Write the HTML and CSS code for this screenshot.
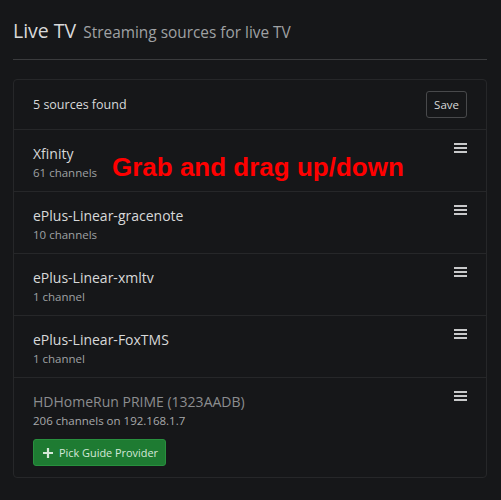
FILE: index.html
```html
<!DOCTYPE html>
<html lang="en">
<head>
  <meta charset="UTF-8" />
  <meta name="viewport" content="width=device-width, initial-scale=1.0" />
  <title>Live TV</title>
  <link rel="stylesheet" href="styles.css">
</head>
<body>
  <div class="page">
    <div class="page-header">
      <h1>Live TV <small>Streaming sources for live TV</small></h1>
    </div>

    <div class="card">
      <div class="card-header">
        <span>5 sources found</span>
        <button class="btn-save">Save</button>
      </div>

      <div class="source">
        <div class="info">
          <div class="name">Xfinity</div>
          <div class="count">61 channels</div>
        </div>
        <span class="handle"><i></i><i></i><i></i></span>
        <div class="hint">Grab and drag up/down</div>
      </div>

      <div class="source">
        <div class="info">
          <div class="name">ePlus-Linear-gracenote</div>
          <div class="count">10 channels</div>
        </div>
        <span class="handle"><i></i><i></i><i></i></span>
      </div>

      <div class="source">
        <div class="info">
          <div class="name">ePlus-Linear-xmltv</div>
          <div class="count">1 channel</div>
        </div>
        <span class="handle"><i></i><i></i><i></i></span>
      </div>

      <div class="source">
        <div class="info">
          <div class="name">ePlus-Linear-FoxTMS</div>
          <div class="count">1 channel</div>
        </div>
        <span class="handle"><i></i><i></i><i></i></span>
      </div>

      <div class="source disabled">
        <div class="info">
          <div class="name">HDHomeRun PRIME (1323AADB)</div>
          <div class="count">206 channels on 192.168.1.7</div>
          <button class="btn-pick">
            <svg width="10" height="10" viewBox="0 0 10 10"><path d="M5 0v10M0 5h10" stroke="currentColor" stroke-width="2.2"/></svg>
            Pick Guide Provider
          </button>
        </div>
        <span class="handle"><i></i><i></i><i></i></span>
      </div>
    </div>
  </div>
</body>
</html>
```

FILE: styles.css
```css
* { box-sizing: border-box; }
body {
  margin: 0;
  background: #161719;
  color: #d8d9da;
  font-family: "Open Sans", "Noto Sans", sans-serif;
}
.page {
  padding: 17px 14px 0 13px;
}
.page-header {
  border-bottom: 1px solid #3a3b3d;
  padding-bottom: 12px;
  margin-bottom: 19px;
}
.page-header h1 {
  margin: 0;
  font-size: 19.5px;
  font-weight: 400;
  line-height: 28px;
  color: #d8d9da;
}
.page-header small {
  font-size: 15.4px;
  color: #9fa1a3;
  margin-left: 2px;
}
.card {
  border: 1px solid #262729;
  border-radius: 4px;
}
.card-header {
  display: flex;
  align-items: center;
  justify-content: space-between;
  height: 50px;
  padding: 0 19px;
  font-size: 12.5px;
  border-bottom: 1px solid #262729;
}
.btn-save {
  font-family: inherit;
  font-size: 11.5px;
  color: #d8d9da;
  background: transparent;
  border: 1px solid #48494b;
  border-radius: 3px;
  height: 27px;
  padding: 0 7px;
}
.source {
  position: relative;
  display: flex;
  justify-content: space-between;
  align-items: flex-start;
  padding: 14px 19px 9px;
  border-bottom: 1px solid #262729;
}
.source:last-child { border-bottom: none; padding-bottom: 11px; }
.name {
  font-size: 14px;
  line-height: 20px;
  color: #d8d9da;
}
.count {
  font-size: 11.5px;
  line-height: 18px;
  color: #9fa1a3;
}
.disabled .name { color: #8c8d8f; }
.disabled .count { color: #a8a9ab; }
.handle {
  display: flex;
  flex-direction: column;
  gap: 2px;
  width: 13px;
  margin-top: -1px;
}
.handle i {
  display: block;
  height: 2px;
  background: #c8c9ca;
}
.btn-pick {
  display: flex;
  align-items: center;
  gap: 6px;
  margin-top: 9px;
  height: 27px;
  padding: 0 7px 0 9px;
  font-family: inherit;
  font-size: 10.9px;
  color: #d4e8d8;
  background: #1e7b32;
  border: 1px solid #28903e;
  border-radius: 3px;
}
.hint {
  position: absolute;
  left: 98px;
  top: 22px;
  font-family: "Liberation Sans", Arial, sans-serif;
  font-weight: 700;
  font-size: 26px;
  color: #ff0000;
}
```
